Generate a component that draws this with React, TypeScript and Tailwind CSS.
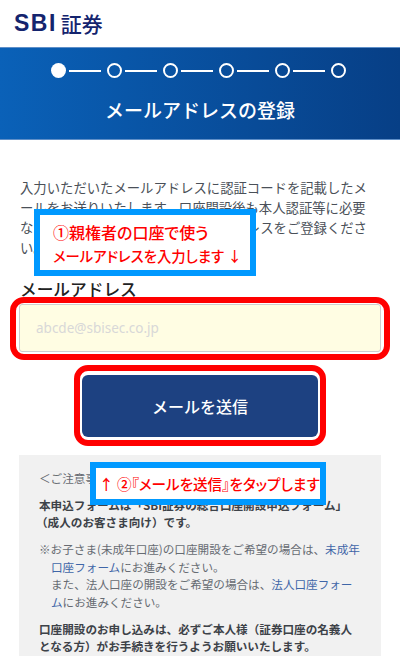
import React from "react";

const jp = "font-['Noto_Sans_CJK_JP','Noto_Sans',sans-serif]";

const steps = [0, 1, 2, 3, 4, 5];

function StepDots() {
  return (
    <div className="flex items-center justify-center pr-[4px]">
      {steps.map((s) => (
        <React.Fragment key={s}>
          {s > 0 && <div className="w-[32px] h-[2px] ml-[3px] mr-[6px] bg-white" />}
          <div className={s === 0 ? "w-[15px] h-[15px] rounded-full bg-white" : "w-[15px] h-[15px] rounded-full border-2 border-white"} />
        </React.Fragment>
      ))}
    </div>
  );
}

export default function App() {
  return (
    <div className={`relative w-[400px] h-[656px] overflow-hidden bg-white ${jp}`}>
      {/* logo */}
      <div className="h-[47px] pl-[14px] pt-[9px] flex items-start text-[#14246e] leading-[28px]">
        <span className="font-['Liberation_Sans',sans-serif] font-bold text-[23px] tracking-[1.5px]">SBI</span>
        <span className="ml-[4px] text-[21px] font-medium">証券</span>
      </div>

      {/* header band */}
      <div className="h-[93px] pt-[15px] bg-gradient-to-r from-[#0a61b8] to-[#073f86] border-y border-[#5f8fc8]">
        <StepDots />
        <div className="mt-[18px] text-center text-white text-[19px] leading-[28px] font-medium">メールアドレスの登録</div>
      </div>

      {/* description */}
      <p className="mt-[38px] ml-[20px] w-[350px] text-[13.35px] leading-[20px] text-[#4a5058]">
        入力いただいたメールアドレスに認証コードを記載したメールをお送りいたします。口座開設後も本人認証等に必要なため、普段ご利用になるメールアドレスをご登録ください。
      </p>

      <div className="mt-[19px] mx-[20px] text-[16.7px] leading-[24px] font-medium text-[#222]">メールアドレス</div>

      {/* input */}
      <div className="mt-[3px] mx-[19px] h-[48px] px-[16px] flex items-center rounded-[3px] border border-[#cfcfcf] bg-[#fffde3] text-[13.5px] text-[#d8d8d8] font-['Noto_Sans',sans-serif]">
        abcde@sbisec.co.jp
      </div>

      {/* button */}
      <div className="mt-[23px] mx-[82px] h-[62px] flex items-center justify-center rounded-[6px] bg-[#1d4181] text-white text-[16px] font-medium">
        メールを送信
      </div>

      {/* notes */}
      <div className="mt-[18px] mx-[19px] h-[220px] px-[20px] pt-[15px] bg-[#f1f1f1] text-[11.6px] leading-[17.5px] text-[#666b72]">
        <p>＜ご注意事項＞</p>
        <p className="mt-[9px] font-bold text-[#3d4248]">
          本申込フォームは「SBI証券の総合口座開設申込フォーム」
          <br />
          <span className="-ml-[3px]">（成人のお客さま向け）です。</span>
        </p>
        <p className="mt-[9.5px] pl-[12px] -indent-[12px]">
          ※お子さま(未成年口座)の口座開設をご希望の場合は、<span className="text-[#3f66a8]">未成年口座フォーム</span>にお進みください。
        </p>
        <p className="pl-[12px]">
          また、法人口座の開設をご希望の場合は、<span className="text-[#3f66a8]">法人口座フォーム</span>にお進みください。
        </p>
        <p className="mt-[9.5px] font-bold text-[#3d4248]">
          口座開設のお申し込みは、必ずご本人様（証券口座の名義人となる方）がお手続きを行うようお願いいたします。
        </p>
      </div>

      {/* annotations laid over the page */}
      <div className="absolute left-[34px] top-[209px] w-[222px] h-[67px] pl-[13px] pt-[5px] border-[6px] border-[#0099ff] bg-white leading-[24px] text-[#ff0000] font-medium whitespace-nowrap [font-feature-settings:'palt']">
        <div className="text-[16px]">①親権者の口座で使う</div>
        <div className="text-[14.4px]">メールアドレスを入力します ↓</div>
      </div>
      <div className="absolute left-[10px] top-[297px] w-[380px] h-[63px] rounded-[14px] border-[6px] border-[#ff0000]" />
      <div className="absolute left-[74px] top-[365px] w-[252px] h-[81px] rounded-[14px] border-[6px] border-[#ff0000]" />
      <div className="absolute left-[90px] top-[462px] w-[236px] h-[43px] pl-[3px] flex items-center border-[6px] border-[#0099ff] bg-white text-[14.6px] text-[#ff0000] font-medium whitespace-nowrap [font-feature-settings:'palt']">
        ↑ ②『メールを送信』をタップします
      </div>
    </div>
  );
}
